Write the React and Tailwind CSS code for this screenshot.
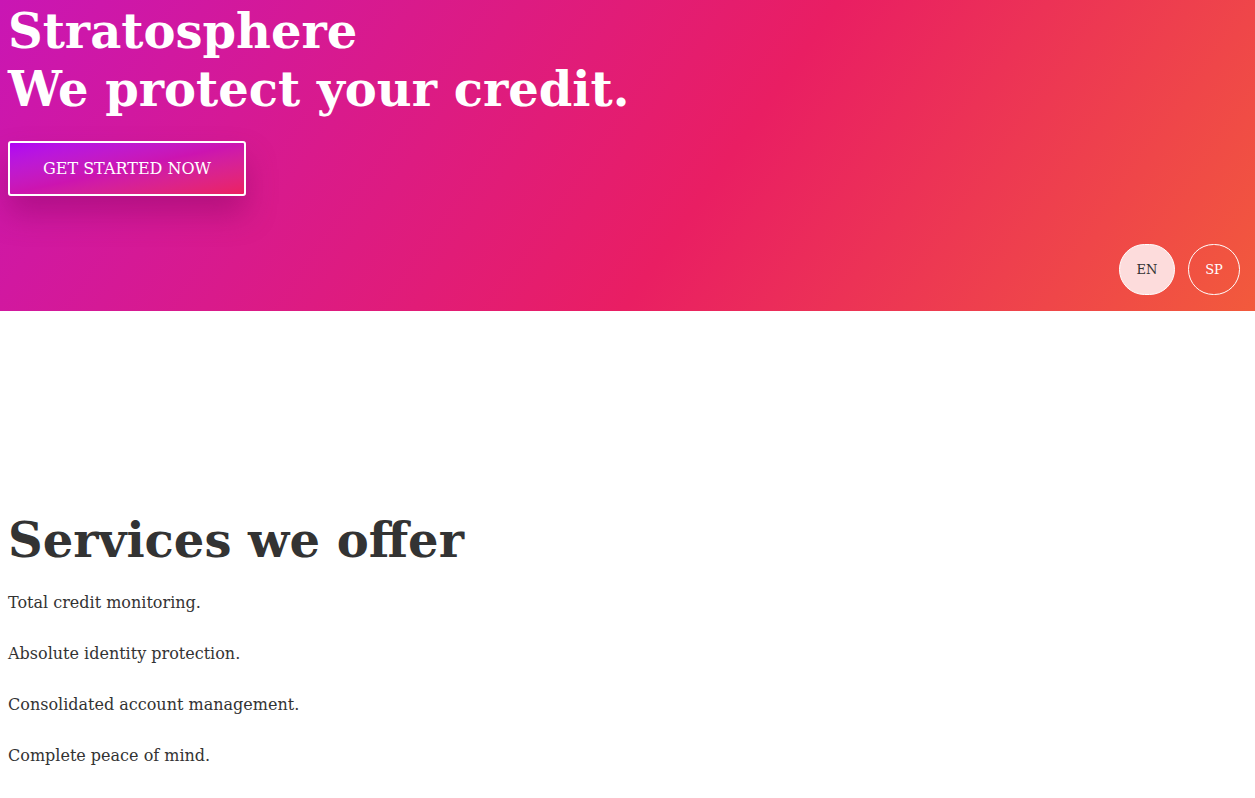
import React, { useState } from 'react';

const services = [
  'Total credit monitoring.',
  'Absolute identity protection.',
  'Consolidated account management.',
  'Complete peace of mind.',
];

export default function App() {
  const [lang, setLang] = useState('EN');

  return (
    <div className="min-h-screen bg-white font-['DejaVu_Serif',serif] text-[#333]">
      {/* Hero */}
      <header className="relative h-[311px] bg-[linear-gradient(125deg,#c916b4_0%,#e91e63_57%,#f25a3c_100%)] px-2 overflow-hidden">
        <h1 className="text-white font-bold text-[48px] leading-[58px] pt-[2px]">
          Stratosphere
          <br />
          We protect your credit.
        </h1>
        <button className="mt-[23px] w-[238px] h-[55px] border-2 border-white rounded-[3px] bg-gradient-to-br from-[#b000f5] via-[#cc14b0] to-[#ec2060] text-white text-[16px] shadow-[0_18px_30px_rgba(120,0,90,0.35)]">
          GET STARTED NOW
        </button>

        <div className="absolute right-[15px] bottom-[16px] flex gap-[13px]">
          <button
            onClick={() => setLang('EN')}
            className={`w-[56px] h-[51px] rounded-full border border-white text-[13px] ${
              lang === 'EN' ? 'bg-[#fddcdc] text-[#333]' : 'bg-transparent text-white'
            }`}
          >
            EN
          </button>
          <button
            onClick={() => setLang('SP')}
            className={`w-[52px] h-[51px] rounded-full border border-white text-[13px] ${
              lang === 'SP' ? 'bg-[#fddcdc] text-[#333]' : 'bg-transparent text-white'
            }`}
          >
            SP
          </button>
        </div>
      </header>

      {/* Services */}
      <section className="px-2 pt-[200px]">
        <h2 className="text-[48px] font-bold leading-[58px] text-[#333]">Services we offer</h2>
        <div className="mt-[24px] flex flex-col gap-[32px] text-[16px] leading-[19px]">
          {services.map((s) => (
            <p key={s}>{s}</p>
          ))}
        </div>
      </section>
    </div>
  );
}
